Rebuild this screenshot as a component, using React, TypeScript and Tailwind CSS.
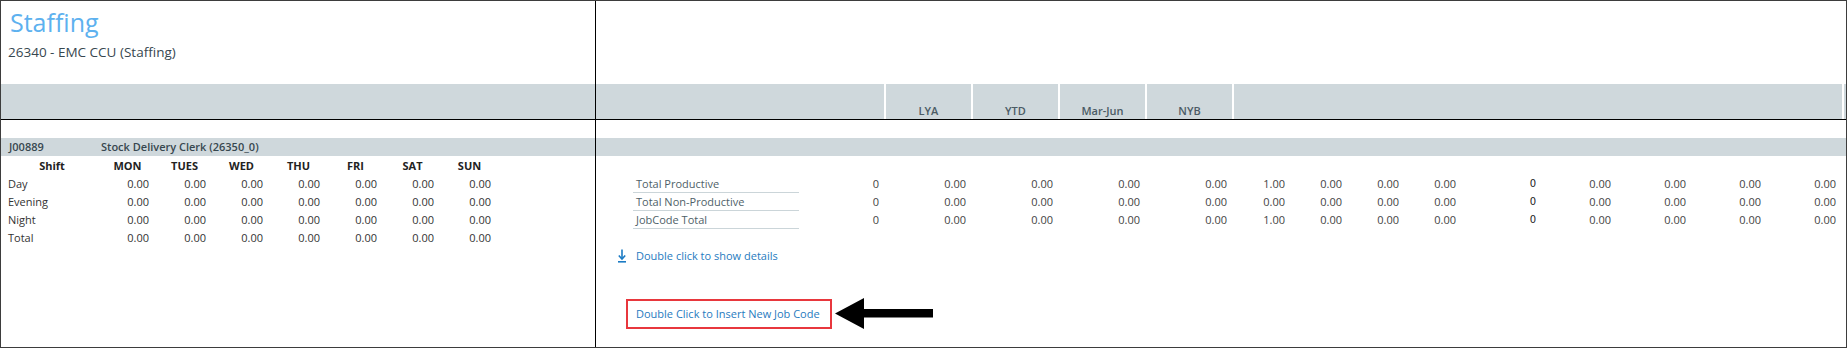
import { Fragment } from 'react'

const days = ['MON', 'TUES', 'WED', 'THU', 'FRI', 'SAT', 'SUN']
const shifts = ['Day', 'Evening', 'Night', 'Total']

const summaryRows = [
  { label: 'Total Productive', first: '0', mid: ['0.00', '0.00', '0.00', '0.00'], week: ['1.00', '0.00', '0.00', '0.00'], count: '0', rest: ['0.00', '0.00', '0.00', '0.00'] },
  { label: 'Total Non-Productive', first: '0', mid: ['0.00', '0.00', '0.00', '0.00'], week: ['0.00', '0.00', '0.00', '0.00'], count: '0', rest: ['0.00', '0.00', '0.00', '0.00'] },
  { label: 'JobCode Total', first: '0', mid: ['0.00', '0.00', '0.00', '0.00'], week: ['1.00', '0.00', '0.00', '0.00'], count: '0', rest: ['0.00', '0.00', '0.00', '0.00'] },
]

const periods = ['LYA', 'YTD', 'Mar-Jun', 'NYB']

function DetailsIcon() {
  return (
    <svg width="8" height="14" viewBox="0 0 8 14" className="shrink-0">
      <path d="M4 0.5V9.5" stroke="#1b7bc4" strokeWidth="1.6" fill="none" />
      <path d="M0.8 6.5L4 10L7.2 6.5" stroke="#1b7bc4" strokeWidth="1.6" fill="none" />
      <rect x="0" y="12" width="8" height="1.6" fill="#1b7bc4" />
    </svg>
  )
}

function LeftArrow() {
  return (
    <svg width="98" height="31" viewBox="0 0 98 31" className="shrink-0">
      <polygon points="0,15.5 29,0 29,11 98,11 98,19.5 29,19.5 29,31" fill="#000" />
    </svg>
  )
}

function LeftPanel() {
  return (
    <div className="w-[595px] shrink-0 border-r border-black flex flex-col">
      <div className="h-[83px] pt-[9px]">
        <div className="pl-[9px] text-[25px] leading-[25px] text-[#5db1ef]">Staffing</div>
        <div className="pl-[7px] mt-[9px] text-[13.5px] leading-[16px] text-[#37474f]">26340 - EMC CCU (Staffing)</div>
      </div>
      <div className="h-[36px] bg-[#cfd8dc] border-b border-black" />
      <div className="h-[18px]" />
      <div className="h-[18px] bg-[#cfd8dc] flex text-[11px] leading-[18px] font-semibold text-[#37474f]">
        <span className="w-[100px] pl-[8px]">J00889</span>
        <span>Stock Delivery Clerk (26350_0)</span>
      </div>
      <div className="grid grid-cols-[98px_repeat(7,57px)] text-[11px] text-[#333]">
        <div className="h-[19px] pt-px leading-[18px] font-bold text-center text-[#222] pl-[4px]">Shift</div>
        {days.map(d => (
          <div key={d} className="h-[19px] pt-px leading-[18px] font-bold text-center text-[#222]">{d}</div>
        ))}
        {shifts.map(s => (
          <Fragment key={s}>
            <div className="h-[18px] leading-[18px] pl-[7px]">{s}</div>
            {days.map(d => (
              <div key={d} className="h-[18px] leading-[18px] text-right pr-[7px]">0.00</div>
            ))}
          </Fragment>
        ))}
      </div>
    </div>
  )
}

function RightPanel() {
  return (
    <div className="flex-1 flex flex-col">
      <div className="h-[83px]" />
      <div className="h-[36px] bg-[#cfd8dc] border-b border-black flex">
        <div className="w-[288px]" />
        {periods.map(p => (
          <div key={p} className="w-[87px] border-l-2 border-white flex items-end justify-center pb-px text-[11px] leading-[14px] font-semibold text-[#4b5b65]">
            {p}
          </div>
        ))}
        <div className="flex-1 border-l-2 border-r-2 border-white" />
        <div className="w-[2px]" />
      </div>
      <div className="h-[18px]" />
      <div className="h-[18px] bg-[#cfd8dc]" />
      <div className="h-[19px]" />
      <div className="flex flex-col text-[11px] text-[#444]">
        {summaryRows.map(r => (
          <div key={r.label} className="flex h-[18px] leading-[17px]">
            <div className="w-[37px]" />
            <div className="w-[166px] pl-[3px] border-b border-[#cbd5d9] text-[#4f5f68]">{r.label}</div>
            <div className="w-[85px] text-right pr-[5px]">{r.first}</div>
            {r.mid.map((v, i) => (
              <div key={i} className="w-[87px] text-right pr-[5px]">{v}</div>
            ))}
            {r.week.map((v, i) => (
              <div key={i} className={`${i === 0 ? 'w-[59px]' : 'w-[57px]'} text-right pr-[6px]`}>{v}</div>
            ))}
            <div className="w-[80px] text-right pr-[6px] text-[#222] font-['DejaVu_Sans',sans-serif] text-[10px]">{r.count}</div>
            {r.rest.map((v, i) => (
              <div key={i} className="w-[75px] text-right pr-[6px]">{v}</div>
            ))}
          </div>
        ))}
      </div>
      <div className="mt-[19px] h-[16px] pl-[22px] flex items-center text-[11px] leading-[16px] text-[#1f7bc0]">
        <DetailsIcon />
        <span className="ml-[10px]">Double click to show details</span>
      </div>
      <div className="mt-[34px] pl-[30px] flex items-center">
        <div className="w-[206px] h-[30px] border-2 border-[#e8373d] pl-[8px] text-[11px] leading-[26px] text-[#1f7bc0] whitespace-nowrap">
          Double Click to Insert New Job Code
        </div>
        <div className="ml-[3px]">
          <LeftArrow />
        </div>
      </div>
    </div>
  )
}

export default function App() {
  return (
    <div className="w-[1847px] h-[348px] bg-white border border-[#3d3d3d] flex font-['Open_Sans',sans-serif] [font-variant-ligatures:none] overflow-hidden">
      <LeftPanel />
      <RightPanel />
    </div>
  )
}
